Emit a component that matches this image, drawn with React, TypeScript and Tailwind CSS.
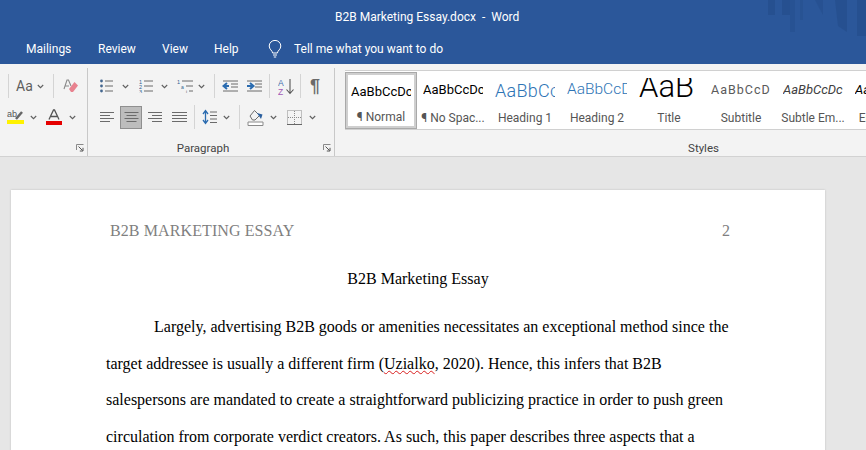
import React from "react";

const Chev = ({ className = "" }: { className?: string }) => (
  <svg width="7" height="5" viewBox="0 0 7 5" className={`shrink-0 ${className}`} fill="none" stroke="#5f5f5f" strokeWidth="1.1">
    <path d="M0.8 1 L3.5 3.7 L6.2 1" />
  </svg>
);

const Ic = ({ w, h, className = "", children }: { w: number; h: number; className?: string; children: React.ReactNode }) => (
  <svg width={w} height={h} viewBox={`0 0 ${w} ${h}`} className={`shrink-0 ${className}`} fill="none">
    {children}
  </svg>
);

const Divider = ({ className = "" }: { className?: string }) => <div className={`w-px h-[24px] bg-[#d4d4d4] shrink-0 ${className}`} />;

const Launcher = () => (
  <svg width="8" height="8" viewBox="0 0 8 8" fill="none" className="absolute right-[3px] bottom-[4px]">
    <path d="M0.5 6 V0.5 H7.5" stroke="#8a8a8a" />
    <path d="M2.5 2.5 L6.5 6.5 M3.8 7 H7 V3.8" stroke="#555" />
  </svg>
);

const TextLines = ({ widths, align }: { widths: number[]; align: "l" | "c" | "r" | "j" }) => (
  <Ic w={15} h={12}>
    {widths.map((wd, i) => {
      const x = align === "c" ? (15 - wd) / 2 : align === "r" ? 15 - wd : 0;
      return <path key={i} d={`M${x} ${1.5 + i * 3}H${x + wd}`} stroke="#6b6b6b" />;
    })}
  </Ic>
);

const Row = ({ className = "", children }: { className?: string; children: React.ReactNode }) => (
  <div className={`flex items-center h-[24px] ${className}`}>{children}</div>
);

const styles = [
  { s: "AaBbCcDc", l: "¶ No Spac...", c: "text-[13px] text-black" },
  { s: "AaBbCc", l: "Heading 1", c: "text-[18px] tracking-[0.3px] font-light text-[#2e74b5]" },
  { s: "AaBbCcD", l: "Heading 2", c: "text-[15.5px] font-light text-[#2e74b5]" },
  { s: "AaBbCcD", l: "Subtitle", c: "text-[12.5px] tracking-[1px] text-[#5a5a5a]" },
  { s: "AaBbCcDc", l: "Subtle Em...", c: "text-[13px] italic text-[#404040]" },
  { s: "AaBbCcDc", l: "Emphasis", c: "text-[13px] italic text-black" },
];

const StyleItem = ({ s, l, c }: { s: string; l: string; c: string }) => (
  <div className="w-[72px] shrink-0 h-[57px] flex flex-col items-center">
    <div className="h-[38px] w-[60px] overflow-hidden flex items-center whitespace-nowrap">
      <span className={c}>{s}</span>
    </div>
    <div className="text-[12px] leading-[18px] text-[#555] whitespace-nowrap">{l}</div>
  </div>
);

export default function App() {
  return (
    <div className="relative w-[866px] h-[450px] overflow-hidden flex flex-col bg-[#e6e6e6] font-['Roboto','Open_Sans',sans-serif]">
      {/* title bar */}
      <div className="relative bg-[#2b579a] h-[64px] shrink-0 text-white text-[12px]">
        <div className="h-[32px] flex items-center pl-[335px] pt-[1px] whitespace-pre">B2B Marketing Essay.docx  -  Word</div>
        <div className="h-[32px] flex items-center pl-[26px] pt-[2px]">
          <span className="w-[72px]">Mailings</span>
          <span className="w-[64px]">Review</span>
          <span className="w-[52px]">View</span>
          <span className="w-[54px]">Help</span>
          <Ic w={14} h={18} className="mr-[12px]">
            <path d="M4.6 13 C4.4 10.5 1.2 9.5 1.2 6 A5.8 5.6 0 0 1 12.8 6 C12.8 9.5 9.6 10.5 9.4 13 Z" stroke="#fff" strokeWidth="1" />
            <path d="M5 15H9M5.8 17H8.2" stroke="#fff" strokeWidth="1" />
          </Ic>
          <span>Tell me what you want to do</span>
        </div>
        {/* decorative pattern */}
        <svg width="100" height="36" viewBox="0 0 100 36" className="absolute right-0 top-0" fill="#244c8a" opacity="0.6">
          <rect x="2" y="0" width="7" height="15" />
          <rect x="16" y="0" width="8" height="15" />
          <rect x="24" y="0" width="5" height="32" opacity="0.7" />
          <rect x="34" y="0" width="3" height="20" opacity="0.6" />
          <path d="M49 0 H57 V15 Z" opacity="0.8" />
          <path d="M69 0 H81 V32 L72 26 Z" />
          <rect x="91" y="0" width="9" height="36" />
        </svg>
      </div>

      {/* ribbon */}
      <div className="h-[93px] shrink-0 flex bg-[#f3f3f3] border-b border-[#d2d2d2] text-[#444]">
        {/* font group */}
        <div className="relative w-[88px] h-[88px] mt-[4px] shrink-0 border-r border-[#c8c8c8]">
          <Row className="mt-[6px]">
            <Divider className="ml-[8px] mr-[7px]" />
            <span className="text-[14px] leading-none text-[#5e5e5e] w-[21px]">Aa</span>
            <Chev />
            <Divider className="ml-[9px] mr-[9px]" />
            <Ic w={15} h={16}>
              <path d="M1 11 L4 2 H5.5 L8 8 M2.5 8 H6" stroke="#8a8a8a" strokeWidth="1.1" />
              <path d="M6 11 L11.5 4 L15 7.5 L10 14 H8 Z" fill="#e8828f" />
            </Ic>
          </Row>
          <Row className="mt-[7px] pl-[7px]">
            <Ic w={17} h={16}>
              <text x="0" y="8" fontSize="9" fontFamily="Liberation Sans" fill="#555">ab</text>
              <path d="M9 10 L15 3" stroke="#666" strokeWidth="2.5" />
              <rect x="0" y="11" width="17" height="4" fill="#fff200" />
            </Ic>
            <Chev className="ml-[6px]" />
            <Ic w={16} h={16} className="ml-[9px]">
              <path d="M3 10.5 L7.5 1 H8.5 L13 10.5 M5 7.5 H11" stroke="#555" strokeWidth="1.3" />
              <rect x="0" y="12" width="16" height="4" fill="#e50000" />
            </Ic>
            <Chev className="ml-[7px]" />
          </Row>
          <Launcher />
        </div>

        {/* paragraph group */}
        <div className="relative w-[247px] h-[88px] mt-[4px] shrink-0 border-r border-[#c8c8c8]">
          <Row className="mt-[6px] pl-[12px]">
            <Ic w={14} h={14}>
              <circle cx="1.5" cy="2" r="1.4" fill="#44678f" /><circle cx="1.5" cy="7" r="1.4" fill="#44678f" /><circle cx="1.5" cy="12" r="1.4" fill="#44678f" />
              <path d="M5 2H13M5 7H13M5 12H13" stroke="#6b6b6b" />
            </Ic>
            <Chev className="ml-[8px]" />
            <Ic w={15} h={14} className="ml-[10px]">
              <text x="0" y="5" fontSize="5.5" fontFamily="Liberation Sans" fill="#2f5d8f">1</text>
              <text x="0" y="10" fontSize="5.5" fontFamily="Liberation Sans" fill="#2f5d8f">2</text>
              <text x="0" y="14.5" fontSize="5.5" fontFamily="Liberation Sans" fill="#2f5d8f">3</text>
              <path d="M5 2H14M5 7H14M5 12H14" stroke="#6b6b6b" />
            </Ic>
            <Chev className="ml-[7px]" />
            <Ic w={17} h={14} className="ml-[9px]">
              <text x="0" y="5" fontSize="5.5" fontFamily="Liberation Sans" fill="#2f5d8f">1</text>
              <text x="4" y="10" fontSize="5" fontFamily="Liberation Sans" fill="#2f5d8f">a</text>
              <text x="9" y="14.5" fontSize="5" fontFamily="Liberation Sans" fill="#6b6b6b">i</text>
              <path d="M5 2H16M9 7H16M12 12H16" stroke="#6b6b6b" />
            </Ic>
            <Chev className="ml-[4px]" />
            <Divider className="ml-[9px] mr-[7px]" />
            <Ic w={17} h={14}>
              <path d="M1 2H16M9 5H16M9 8H16M1 12H16" stroke="#6b6b6b" />
              <path d="M7 7H2M5 4 L1.5 7 L5 10" stroke="#2b6cb0" strokeWidth="2" />
            </Ic>
            <Ic w={17} h={14} className="ml-[7px]">
              <path d="M1 2H16M9 5H16M9 8H16M1 12H16" stroke="#6b6b6b" />
              <path d="M1 7H6M4 4 L7.5 7 L4 10" stroke="#2b6cb0" strokeWidth="2" />
            </Ic>
            <Divider className="ml-[6px] mr-[8px]" />
            <Ic w={16} h={17}>
              <text x="0" y="8" fontSize="8.5" fontFamily="Liberation Sans" fill="#3f6fae">A</text>
              <text x="0" y="16.5" fontSize="8.5" fontFamily="Liberation Sans" fill="#a259b5">Z</text>
              <path d="M12 1V15M8.5 11.5 L12 15.5 L15.5 11.5" stroke="#555" strokeWidth="1.1" />
            </Ic>
            <Divider className="ml-[6px] mr-[9px]" />
            <span className="text-[18px] leading-none text-[#6a6a6a] font-bold font-['Liberation_Sans']">¶</span>
          </Row>
          <Row className="mt-[7px] pl-[12px]">
            <TextLines widths={[14, 10, 14, 10]} align="l" />
            <div className="ml-[5px] w-[22px] h-[23px] bg-[#bdbdbd] border border-[#8f8f8f] flex items-center justify-center shrink-0">
              <TextLines widths={[14, 10, 14, 10]} align="c" />
            </div>
            <div className="ml-[5px]"><TextLines widths={[14, 10, 14, 10]} align="r" /></div>
            <div className="ml-[10px]"><TextLines widths={[15, 15, 15, 15]} align="j" /></div>
            <Divider className="ml-[7px] mr-[7px]" />
            <Ic w={16} h={16}>
              <path d="M3.5 2V14M1 5 L3.5 1.5 L6 5M1 11 L3.5 14.5 L6 11" stroke="#2b6cb0" strokeWidth="1.3" />
              <path d="M8 3H15M8 6.5H15M8 10H15M8 13.5H15" stroke="#6b6b6b" />
            </Ic>
            <Chev className="ml-[5px]" />
            <Divider className="ml-[9px] mr-[7px]" />
            <Ic w={17} h={17}>
              <path d="M3 7 L7.5 1.5 L12.5 6.5 L8 11 H5.5 Z" stroke="#6b6b6b" />
              <path d="M10 4 L15.5 5.5 L14 10 Z" fill="#2b5f9e" />
              <path d="M1 13H16V16.5H1Z" stroke="#8a8a8a" fill="#fff" />
            </Ic>
            <Chev className="ml-[6px]" />
            <Ic w={15} h={15} className="ml-[10px]">
              <rect x="0.5" y="0.5" width="14" height="14" stroke="#8a8a8a" strokeDasharray="1 1" />
              <path d="M7.5 1V14M1 7.5H14" stroke="#8a8a8a" strokeDasharray="1 1" />
              <path d="M0 14.5H15" stroke="#666" />
            </Ic>
            <Chev className="ml-[7px]" />
          </Row>
          <div className="absolute left-0 right-[16px] top-[72px] text-center text-[11.5px] leading-[16px] text-[#444]">Paragraph</div>
          <Launcher />
        </div>

        {/* styles group */}
        <div className="relative flex-1 min-w-0 mt-[4px] h-[88px]">
          <div className="ml-[10px] mt-[2px] h-[60px] bg-white border-y border-[#d0d0d0] flex overflow-hidden">
            <div className="w-[72px] shrink-0 h-[57px] mt-px border border-[#a9a9a9]">
              <div className="h-full border-2 border-[#cfcfcf] flex flex-col items-center overflow-hidden">
                <div className="h-[35px] w-[60px] overflow-hidden flex items-center whitespace-nowrap text-[13px] text-black">AaBbCcDc</div>
                <div className="text-[12px] leading-[18px] text-[#555] whitespace-nowrap">¶ Normal</div>
              </div>
            </div>
            <StyleItem {...styles[0]} />
            <StyleItem {...styles[1]} />
            <StyleItem {...styles[2]} />
            <div className="w-[72px] shrink-0 h-[57px] flex flex-col items-center">
              <div className="h-[38px] w-[60px] pt-[7px]">
                <div className="h-[30px] overflow-hidden">
                  <div className="text-[31px] leading-[40px] -mt-[11px] font-light text-black whitespace-nowrap">AaB</div>
                </div>
              </div>
              <div className="text-[12px] leading-[18px] text-[#555] whitespace-nowrap">Title</div>
            </div>
            <StyleItem {...styles[3]} />
            <StyleItem {...styles[4]} />
            <StyleItem {...styles[5]} />
          </div>
          <div className="absolute left-[303px] top-[72px] w-[131px] text-center text-[11.5px] leading-[16px] text-[#444]">Styles</div>
        </div>
      </div>

      {/* document */}
      <div className="flex-1 min-h-0 overflow-hidden pl-[11px] pt-[33px]">
        <div className="w-[814px] h-[300px] bg-white shadow-[0_0_2px_#bdbdbd] font-['Liberation_Serif',serif] text-[16px] text-black whitespace-nowrap">
          <div className="flex justify-between pt-[29px] pl-[99px] pr-[95px] h-[56px] text-[#7f7f7f] text-[16px] leading-[24px]">
            <span className="tracking-[0.1px]">B2B MARKETING ESSAY</span>
            <span>2</span>
          </div>
          <div className="w-[814px] text-center mt-[21px] h-[24px] leading-[24px]">B2B Marketing Essay</div>
          <div className="pl-[95px] mt-[18px] leading-[36.5px]">
            <div className="pl-[48px]">Largely, advertising B2B goods or amenities necessitates an exceptional method since the</div>
            <div>target addressee is usually a different firm (<span className="underline decoration-wavy decoration-[#d81e1e] decoration-1">Uzialko</span>, 2020). Hence, this infers that B2B</div>
            <div>salespersons are mandated to create a straightforward publicizing practice in order to push green</div>
            <div>circulation from corporate verdict creators. As such, this paper describes three aspects that a</div>
          </div>
        </div>
      </div>
    </div>
  );
}
